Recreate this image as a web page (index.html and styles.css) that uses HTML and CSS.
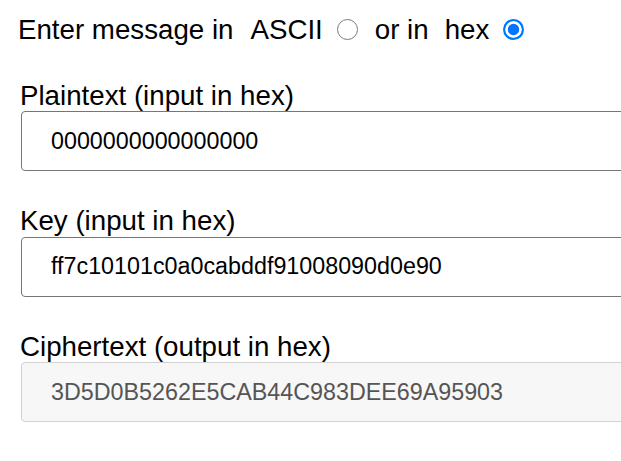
FILE: index.html
```html
<!DOCTYPE html>
<html lang="en">
<head>
<meta charset="utf-8">
<title>Cipher</title>
<link rel="stylesheet" href="styles.css">
</head>
<body>
<div class="page">
  <div class="mode">
    <span>Enter message in</span>
    <label class="mode-label" for="ascii">ASCII</label>
    <input class="radio radio-ascii" type="radio" name="mode" id="ascii">
    <span class="mode-or">or in</span>
    <label class="mode-label mode-hex" for="hex">hex</label>
    <input class="radio radio-hex" type="radio" name="mode" id="hex" checked>
  </div>
  <div class="field">
    <label class="field-label" for="pt">Plaintext (input in hex)</label>
    <input class="field-input" id="pt" type="text" value="0000000000000000">
  </div>
  <div class="field">
    <label class="field-label" for="key">Key (input in hex)</label>
    <input class="field-input" id="key" type="text" value="ff7c10101c0a0cabddf91008090d0e90">
  </div>
  <div class="field">
    <label class="field-label" for="ct">Ciphertext (output in hex)</label>
    <input class="field-input field-output" id="ct" type="text" value="3D5D0B5262E5CAB44C983DEE69A95903" readonly>
  </div>
</div>
</body>
</html>
```
FILE: styles.css
```css
html, body {
  margin: 0;
  padding: 0;
  background: #fff;
}
body {
  font-family: "Liberation Sans", Arial, sans-serif;
  color: #000;
  overflow: hidden;
}
.page {
  padding: 14px 0 0 20px;
  overflow: hidden;
}
.mode {
  display: flex;
  align-items: center;
  font-size: 27.7px;
  line-height: 31.6px;
  margin-left: -2px;
}
.mode-label {
  margin-left: 17px;
}
.mode-or {
  margin-left: 17px;
}
.mode-hex {
  margin-left: 16px;
}
.radio {
  appearance: none;
  -webkit-appearance: none;
  width: 21px;
  height: 21px;
  margin: 0 0 0 14px;
  border: 1.6px solid #7a7a7a;
  border-radius: 50%;
  background: #fff;
  box-sizing: border-box;
}
.radio-hex {
  margin-left: 14px;
}
.radio:checked {
  border: 2px solid #0075ff;
  background: #0075ff;
  box-shadow: inset 0 0 0 2.8px #fff;
}
.field {
  display: flex;
  flex-direction: column;
  margin-top: 34px;
}
.field-label {
  font-size: 27.7px;
  line-height: 31.6px;
}
.field-input {
  box-sizing: border-box;
  width: 760px;
  height: 60px;
  margin: 0 0 0 1px;
  padding: 0 0 0 29px;
  border: 1px solid #767676;
  border-radius: 4px;
  font-family: "Liberation Sans", Arial, sans-serif;
  font-size: 23.3px;
  color: #000;
  background: #fff;
  outline: none;
}
.field-output {
  border-color: #d2d2d2;
  background: #f7f7f7;
  color: #555;
}
```
